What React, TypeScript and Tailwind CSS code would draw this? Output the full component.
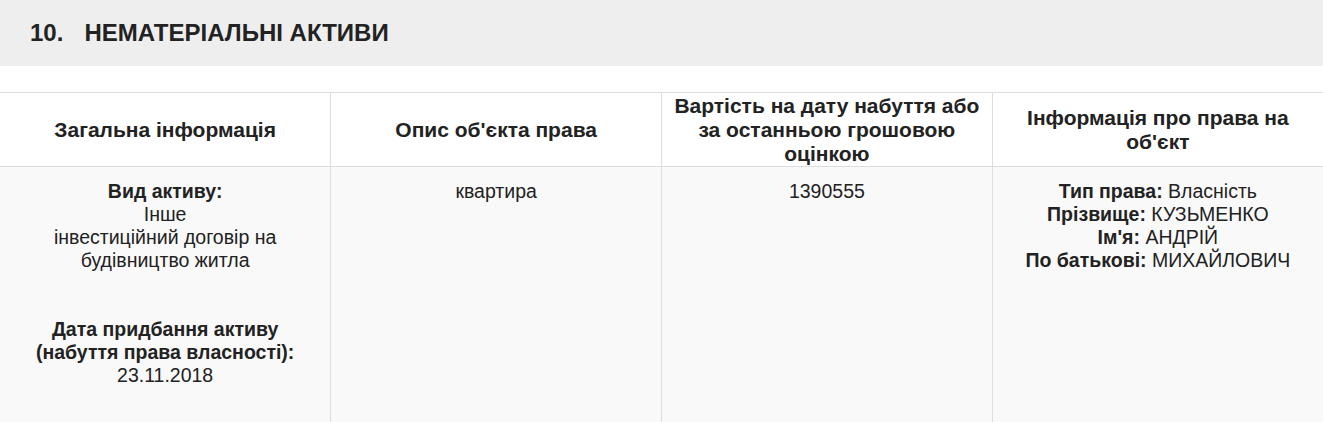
export default function App() {
  const font = { fontFamily: '"Liberation Sans", Arial, sans-serif' };
  return (
    <div className="w-[1323px] h-[422px] overflow-hidden bg-white text-[#222]" style={font}>
      <div className="h-[66px] bg-[#eeeeee] flex items-center pl-[30px]">
        <h2 className="text-[24px] font-bold leading-none text-[#222] flex">
          <span>10.</span>
          <span className="ml-[21px]">НЕМАТЕРІАЛЬНІ АКТИВИ</span>
        </h2>
      </div>
      <div className="h-[26px]" />
      <table className="w-full table-fixed border-collapse text-[19.5px]">
        <thead>
          <tr className="h-[74px] border-t border-b border-[#dddddd] text-[21px]">
            <th className="w-1/4 align-middle text-center font-bold leading-6 px-3 py-0">Загальна інформація</th>
            <th className="w-1/4 align-middle text-center font-bold leading-6 px-3 py-0 border-l border-[#dddddd]">Опис об'єкта права</th>
            <th className="w-1/4 align-middle text-center font-bold leading-6 px-3 py-0 border-l border-[#dddddd]">Вартість на дату набуття або за останньою грошовою оцінкою</th>
            <th className="w-1/4 align-middle text-center font-bold leading-6 px-3 py-0 border-l border-[#dddddd]">Інформація про права на об'єкт</th>
          </tr>
        </thead>
        <tbody>
          <tr className="bg-[#f9f9f9] h-[260px]">
            <td className="align-top text-center leading-[23px] px-3 pt-[13px]">
              <b>Вид активу:</b>
              <br />
              Інше
              <br />
              інвестиційний договір на будівництво житла
              <br />
              <br />
              <br />
              <b>Дата придбання активу (набуття права власності):</b>
              <br />
              23.11.2018
            </td>
            <td className="align-top text-center leading-[23px] px-3 pt-[13px] border-l border-[#dddddd]">квартира</td>
            <td className="align-top text-center leading-[23px] px-3 pt-[13px] border-l border-[#dddddd]">1390555</td>
            <td className="align-top text-center leading-[23px] px-3 pt-[13px] border-l border-[#dddddd]">
              <b>Тип права:</b> Власність
              <br />
              <b>Прізвище:</b> КУЗЬМЕНКО
              <br />
              <b>Ім'я:</b> АНДРІЙ
              <br />
              <b>По батькові:</b> МИХАЙЛОВИЧ
            </td>
          </tr>
        </tbody>
      </table>
    </div>
  );
}
